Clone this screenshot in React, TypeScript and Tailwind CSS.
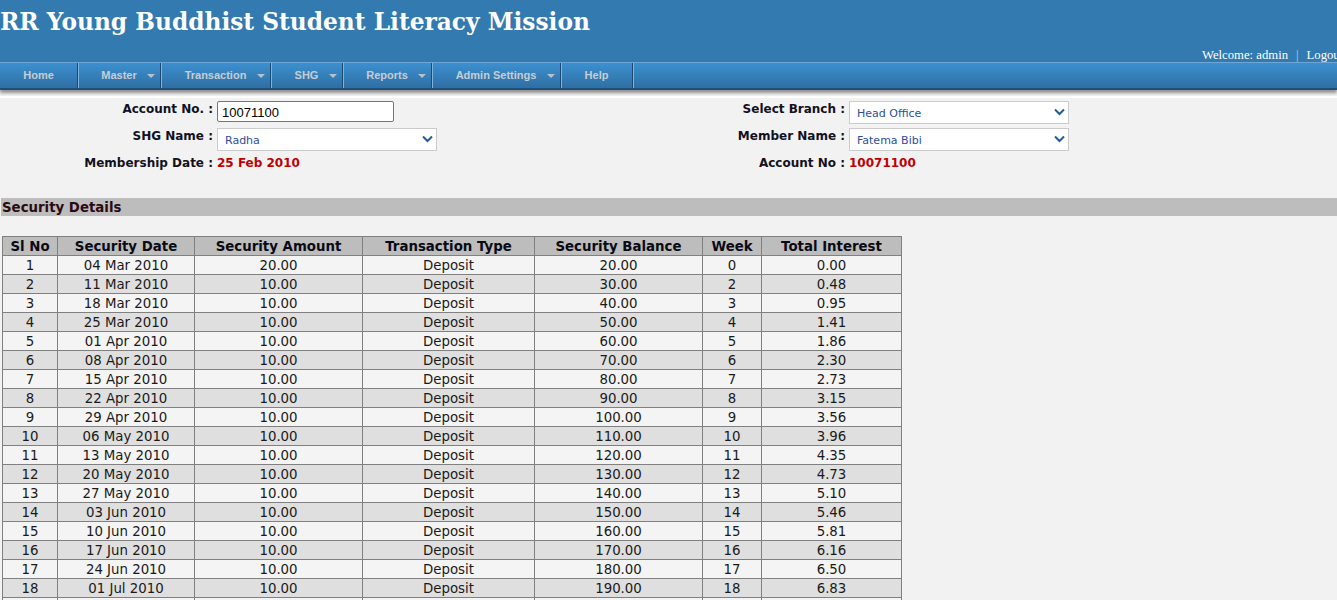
import React from 'react';

const menu = [
  { label: 'Home', w: 'w-[78px]', drop: false },
  { label: 'Master', w: 'w-[83px]', drop: true },
  { label: 'Transaction', w: 'w-[110px]', drop: true },
  { label: 'SHG', w: 'w-[72px]', drop: true },
  { label: 'Reports', w: 'w-[89px]', drop: true },
  { label: 'Admin Settings', w: 'w-[129px]', drop: true },
  { label: 'Help', w: 'w-[72px]', drop: false },
];

const rows = [
  ['1', '04 Mar 2010', '20.00', 'Deposit', '20.00', '0', '0.00'],
  ['2', '11 Mar 2010', '10.00', 'Deposit', '30.00', '2', '0.48'],
  ['3', '18 Mar 2010', '10.00', 'Deposit', '40.00', '3', '0.95'],
  ['4', '25 Mar 2010', '10.00', 'Deposit', '50.00', '4', '1.41'],
  ['5', '01 Apr 2010', '10.00', 'Deposit', '60.00', '5', '1.86'],
  ['6', '08 Apr 2010', '10.00', 'Deposit', '70.00', '6', '2.30'],
  ['7', '15 Apr 2010', '10.00', 'Deposit', '80.00', '7', '2.73'],
  ['8', '22 Apr 2010', '10.00', 'Deposit', '90.00', '8', '3.15'],
  ['9', '29 Apr 2010', '10.00', 'Deposit', '100.00', '9', '3.56'],
  ['10', '06 May 2010', '10.00', 'Deposit', '110.00', '10', '3.96'],
  ['11', '13 May 2010', '10.00', 'Deposit', '120.00', '11', '4.35'],
  ['12', '20 May 2010', '10.00', 'Deposit', '130.00', '12', '4.73'],
  ['13', '27 May 2010', '10.00', 'Deposit', '140.00', '13', '5.10'],
  ['14', '03 Jun 2010', '10.00', 'Deposit', '150.00', '14', '5.46'],
  ['15', '10 Jun 2010', '10.00', 'Deposit', '160.00', '15', '5.81'],
  ['16', '17 Jun 2010', '10.00', 'Deposit', '170.00', '16', '6.16'],
  ['17', '24 Jun 2010', '10.00', 'Deposit', '180.00', '17', '6.50'],
  ['18', '01 Jul 2010', '10.00', 'Deposit', '190.00', '18', '6.83'],
  ['', '', '', '', '', '', ''],
];

const headers = [
  { label: 'Sl No', w: 'w-[55px]' },
  { label: 'Security Date', w: 'w-[137px]' },
  { label: 'Security Amount', w: 'w-[168px]' },
  { label: 'Transaction Type', w: 'w-[172px]' },
  { label: 'Security Balance', w: 'w-[168px]' },
  { label: 'Week', w: 'w-[59px]' },
  { label: 'Total Interest', w: 'w-[140px]' },
];

const SelectBox = ({ value }: { value: string }) => (
  <div className="relative w-[220px] h-[23px]">
    <select
      defaultValue={value}
      className="block appearance-none w-full h-full bg-white border border-[#cccccc] pl-[7px] pt-[4px] text-[11px] text-[#2a4f9a] outline-none"
    >
      <option>{value}</option>
    </select>
    <svg className="absolute right-[4px] top-[7px] w-[11px] h-[8px] pointer-events-none" viewBox="0 0 11 8" fill="none">
      <path d="M1 1.5 L5.5 6 L10 1.5" stroke="#1f5c99" strokeWidth="2" />
    </svg>
  </div>
);

const FormRow = ({ label, children }: { label: string; children: React.ReactNode }) => (
  <div className="flex items-start h-[27px]">
    <div className="w-[217px] pr-[4px] text-right text-[12px] leading-[16px] font-bold text-[#111122] whitespace-nowrap">{label}</div>
    {children}
  </div>
);

export default function App() {
  return (
    <div className="h-[600px] overflow-hidden bg-[#f2f2f2] font-['DejaVu_Sans','Liberation_Sans',sans-serif]">
      {/* Header */}
      <div className="h-[62px] bg-[#337ab0] relative overflow-hidden">
        <h1 className="pt-[7px] text-[23.3px] leading-[30px] font-bold text-white whitespace-nowrap font-['DejaVu_Serif',serif]">
          RR Young Buddhist Student Literacy Mission
        </h1>
        <div className="absolute left-[1202px] top-[48px] flex w-[200px] text-[12.7px] leading-[14px] text-white font-['Liberation_Serif',serif] whitespace-nowrap">
          <span>Welcome: admin</span>
          <span className="mx-[8px] text-[#9fd3f5]">|</span>
          <span>Logout</span>
        </div>
      </div>

      {/* Menu */}
      <div className="h-[28px] flex border-t border-[#6ea6d6] border-b-2 border-b-[#1f4f78] bg-gradient-to-b from-[#3c90cf] to-[#2f6fa3] shadow-[0_3px_3px_rgba(0,0,0,0.4)] relative">
        {menu.map((m) => (
          <div
            key={m.label}
            className={`${m.w} relative flex items-center justify-center border-r border-r-[#1d4a70] shadow-[1px_0_0_#7fb2dc] text-[11px] font-bold text-[#c6cdd3] font-['Liberation_Sans',sans-serif]`}
          >
            <span>{m.label}</span>
            {m.drop && (
              <span className="absolute right-[5px] top-[11px] w-0 h-0 border-x-[4px] border-x-transparent border-t-[4px] border-t-[#b4c2ce]" />
            )}
          </div>
        ))}
      </div>

      {/* Account form */}
      <div className="mt-[6px] pt-[3px] border-t-2 border-t-white flex h-[102px]">
        <div className="w-[632px]">
          <FormRow label="Account No. :">
            <input
              defaultValue="10071100"
              className="w-[177px] h-[21px] bg-white border border-[#767676] rounded-[2px] px-[3px] pl-[4px] pt-px text-[13px] text-black font-['Liberation_Sans',sans-serif] outline-none"
            />
          </FormRow>
          <FormRow label="SHG Name :">
            <SelectBox value="Radha" />
          </FormRow>
          <FormRow label="Membership Date :">
            <span className="text-[12px] leading-[16px] font-bold text-[#c00000]">25 Feb 2010</span>
          </FormRow>
        </div>
        <div>
          <FormRow label="Select Branch :">
            <SelectBox value="Head Office" />
          </FormRow>
          <FormRow label="Member Name :">
            <SelectBox value="Fatema Bibi" />
          </FormRow>
          <FormRow label="Account No :">
            <span className="text-[12px] leading-[16px] font-bold text-[#c00000]">10071100</span>
          </FormRow>
        </div>
      </div>

      {/* Section title */}
      <div className="h-[18px] ml-[1px] bg-[#bdbdbd] pl-[1px] pt-[1px] text-[13.33px] leading-[17px] font-bold text-[#2b0a12]">
        Security Details
      </div>

      {/* Table */}
      <table className="mt-[20px] ml-[2px] w-[900px] table-fixed border-collapse text-[13.33px] text-[#1a1a1a]">
        <thead>
          <tr className="h-[19px] bg-[#bdbdbd]">
            {headers.map((h) => (
              <th key={h.label} className={`${h.w} p-0 pt-px border border-[#808080] text-center font-bold leading-[17px] text-[#0a0a14]`}>
                {h.label}
              </th>
            ))}
          </tr>
        </thead>
        <tbody>
          {rows.map((row, i) => (
            <tr key={i} className={`h-[19px] ${i % 2 === 0 ? 'bg-[#f4f4f4]' : 'bg-[#dfdfdf]'}`}>
              {row.map((cell, j) => (
                <td key={j} className="p-0 pt-px border border-[#808080] text-center leading-[17px]">
                  {cell}
                </td>
              ))}
            </tr>
          ))}
        </tbody>
      </table>
    </div>
  );
}
